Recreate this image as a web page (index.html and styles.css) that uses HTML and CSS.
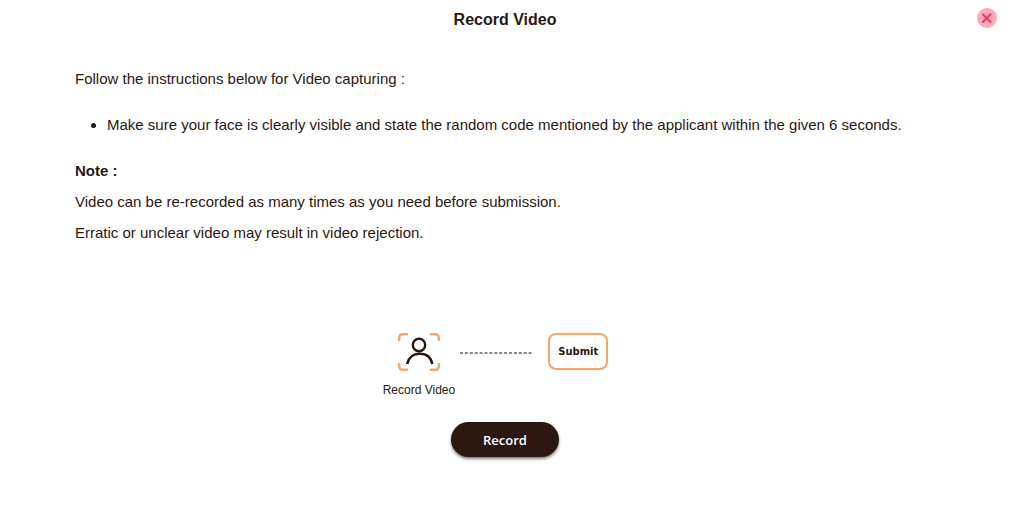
FILE: index.html
```html
<!DOCTYPE html>
<html lang="en">
<head>
<meta charset="utf-8">
<meta name="viewport" content="width=device-width, initial-scale=1">
<title>Record Video</title>
<link rel="stylesheet" href="styles.css">
</head>
<body>
<main class="dialog">
  <header class="dialog-header">
    <h1 class="dialog-title">Record Video</h1>
    <button class="close" type="button" aria-label="Close">
      <svg width="20" height="20" viewBox="0 0 20 20" aria-hidden="true"><circle cx="10" cy="10" r="10" fill="#ffa9ba"/><path d="M6 6.500l7.500 7.500M13.500 6.500l-7.500 7.500" stroke="#f5315f" stroke-width="2" stroke-linecap="round"/></svg>
    </button>
  </header>
  <section class="instructions">
    <p>Follow the instructions below for Video capturing :</p>
    <ul class="list">
      <li>Make sure your face is clearly visible and state the random code mentioned by the applicant within the given 6 seconds.</li>
    </ul>
    <h2 class="note-title">Note :</h2>
    <p class="note">Video can be re-recorded as many times as you need before submission.</p>
    <p class="note">Erratic or unclear video may result in video rejection.</p>
  </section>
  <section class="steps">
    <div class="step">
      <svg width="42" height="38" viewBox="0 0 42 38" fill="none" aria-hidden="true">
        <path d="M1.200 8V5Q1.200 1.200 5 1.200h5M32 1.200h5q3.800 0 3.800 3.800v3M40.800 30v3q0 3.800-3.800 3.800h-5M10 36.800H5q-3.800 0-3.800-3.800v-3" stroke="#f9a566" stroke-width="2.400"/>
        <circle cx="21" cy="12" r="6.200" stroke="#2c1810" stroke-width="2.400"/>
        <path d="M9.200 31C10.500 24.500 15.300 20.700 21.800 20.700S33 24.500 34.300 31" stroke="#2c1810" stroke-width="2.500"/>
      </svg>
      <span class="step-label">Record Video</span>
    </div>
    <svg class="connector" width="72" height="2" viewBox="0 0 72 2" aria-hidden="true"><path d="M0 1h72" stroke="#898889" stroke-width="2" stroke-dasharray="3 1.900"/></svg>
    <span class="submit">Submit</span>
  </section>
  <button class="record" type="button">Record</button>
</main>
</body>
</html>
```
FILE: styles.css
```css
* {
  box-sizing: border-box;
}

body {
  margin: 0;
  background: #fff;
  color: #2c1810;
  font: 15px/18px "Liberation Sans", Arial, sans-serif;
}

.dialog {
  display: flex;
  flex-direction: column;
  padding: 8px 5px 24px 0;
}

.dialog-header {
  display: grid;
  grid-template-columns: 1fr auto 1fr;
  align-items: start;
}

.dialog-title {
  grid-column: 2;
  margin: 0;
  font-size: 16px;
  line-height: 24px;
}

.close {
  justify-self: end;
  display: flex;
  margin-right: 13px;
  padding: 0;
  border: 0;
  background: none;
  cursor: pointer;
}

.instructions {
  padding: 38px 69px 0 75px;
}

.instructions p {
  margin: 0;
}

.list {
  margin: 28px 0;
  padding-left: 32px;
}

.note-title {
  margin: 0;
  font-size: 15px;
  line-height: 18px;
}

.instructions .note {
  margin-top: 13px;
}

.steps {
  display: flex;
  justify-content: center;
  align-items: flex-start;
  margin-top: 91px;
  padding-right: 20px;
}

.step {
  display: flex;
  flex-direction: column;
  align-items: center;
  gap: 10px;
  padding: 0 1px;
}

.step-label {
  font-size: 12px;
  line-height: 18px;
}

.connector {
  margin: 19px 16px 0 4px;
}

.submit {
  padding: 0 8px;
  border: 2px solid #f9a566;
  border-radius: 8px;
  font: bold 10px/33px "DejaVu Sans", Verdana, sans-serif;
}

.record {
  align-self: center;
  margin-top: 23px;
  padding: 1px 32px 0;
  border: 0;
  border-radius: 18px;
  background: #2c1810;
  box-shadow: 0 2px 3px rgba(0, 0, 0, 0.5);
  color: #fff;
  font: 600 13px/34px "Open Sans", sans-serif;
  cursor: pointer;
}
```
